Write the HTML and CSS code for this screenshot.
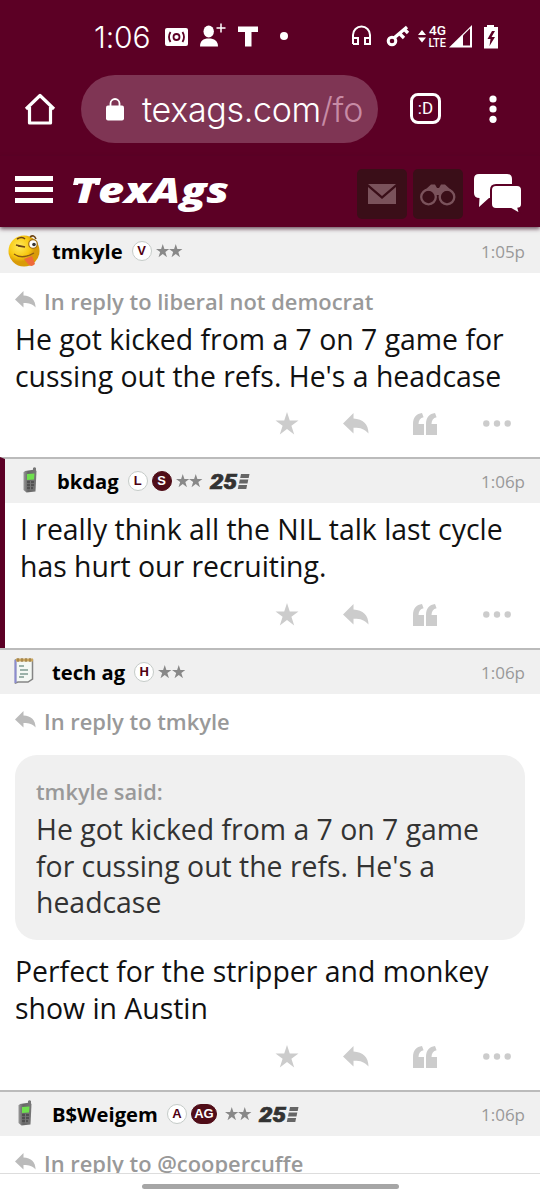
FILE: index.html
```html
<!DOCTYPE html>
<html lang="en">
<head>
  <meta charset="utf-8">
  <title>TexAgs Forums</title>
  <link rel="stylesheet" href="styles.css">
</head>
<body>
  <svg class="defs" width="0" height="0">
    <symbol id="star" viewBox="0 0 24 24"><path d="M12 0l2.900 8.800H24l-7.400 5.500 2.900 9.100L12 17.800l-7.500 5.600 2.900-9.100L0 8.800h9.100z"/></symbol>
    <symbol id="reply" viewBox="0 0 26 21"><path d="M0 10.500L10.500 0v5.500C20 6 25.500 11 25.500 20.500 21.500 15.800 17 14.700 10.500 14.800V20.500z"/></symbol>
    <symbol id="quote" viewBox="0 0 24 22"><path d="M0 22V11C0 4.500 3.500.6 9 0l1.600 4.300C7.200 5 5.600 7.500 5.500 11H11v11zM13 22V11C13 4.500 16.500.6 22 0l1.600 4.300C20.200 5 18.600 7.500 18.500 11H24v11z"/></symbol>
    <symbol id="dots" viewBox="0 0 28 7"><circle cx="3.300" cy="3.500" r="3.200"/><circle cx="14" cy="3.500" r="3.200"/><circle cx="24.700" cy="3.500" r="3.200"/></symbol>
    <linearGradient id="metal"><stop offset="0" stop-color="#999"/><stop offset=".35" stop-color="#666"/><stop offset="1" stop-color="#777"/></linearGradient>
    <symbol id="phone" viewBox="0 0 16 26">
      <path d="M11 4V1q1.500-1.500 3 0v5z" fill="#777"/>
      <path d="M3 4L13 2.500l1.500 1.500-1 20.500-9 1L1.500 23V5.500z" fill="url(#metal)"/>
      <path d="M5 7l7.500-.5-.5 6-7 .5z" fill="#6fe04e"/>
      <path d="M5 15h7M5 18h7M5 21h6" stroke="#484848" stroke-width="1.300"/>
      <path d="M8.500 14v9" stroke="#777"/>
    </symbol>
  </svg>

  <div class="status">
    <span class="clock">1:06</span>
    <svg class="status-left" width="130" height="30" viewBox="0 0 130 30">
      <rect x="1" y="6" width="23" height="18" rx="2" fill="#fff"/>
      <g fill="none" stroke="#5c0025" stroke-width="1.800"><circle cx="12.500" cy="15" r="3"/><path d="M6.500 10q-3 5 0 10M18.500 10q3 5 0 10"/></g>
      <g fill="#fff"><ellipse cx="44.700" cy="9.500" rx="5.200" ry="6"/><path d="M36 24.500c0-5.500 3-8 8.700-8S54 19 54 24.500z"/>
      <path d="M74 4.500h20V10h-6.500v14.500H81V10h-7z"/><circle cx="120" cy="14" r="4"/></g>
      <path d="M57 1.500v9M52.500 6h9" stroke="#fff" stroke-width="1.500"/>
    </svg>
    <svg class="status-right" width="152" height="30" viewBox="0 0 152 30">
      <path d="M2 22V13a8.500 8.500 0 0 1 17 0v9h-5v-6h4M2 16h5v6H2" fill="none" stroke="#fff" stroke-width="2"/>
      <circle cx="41" cy="19" r="3.800" fill="none" stroke="#fff" stroke-width="3"/>
      <path d="M43 16L56 5M49 12l4 4M54 8l3 3" stroke="#fff" stroke-width="3.300"/>
      <path d="M67 13l4-5 4 5zM67 15.500l4 5 4-5z" fill="#fff"/>
      <g fill="#fff" font-family="Roboto" font-size="12.500" font-weight="500"><text x="78" y="13" textLength="17" lengthAdjust="spacingAndGlyphs">4G</text><text x="77.500" y="25" textLength="17.500" lengthAdjust="spacingAndGlyphs">LTE</text></g>
      <path d="M98 25.500h23V3z" fill="#fff"/><path d="M112 13.500l7-7V23.500h-7z" fill="#5c0025"/>
      <path d="M133 5h3V3h7v2h4v21.500h-14V5z" fill="#fff"/><path d="M141 9l-4.500 8h3l-1 7 5.500-9h-3.500l3.500-6z" fill="#5c0025"/>
    </svg>
  </div>

  <div class="browser">
    <svg class="home" width="32" height="32" viewBox="0 0 32 32"><path d="M2 16L16 2.500 30 16M5.500 14v16h21V14" fill="none" stroke="#fff" stroke-width="3.200" stroke-linejoin="round"/></svg>
    <div class="url">
      <svg width="18" height="23" viewBox="0 0 18 23"><rect y="7.500" width="18" height="15" rx="2" fill="#fff"/><path d="M4.500 9V5.500a4.500 4.500 0 0 1 9 0V9" fill="none" stroke="#fff" stroke-width="1.800"/></svg>
      <span>texags.com<i>/fo</i></span>
    </div>
    <div class="tabs">:D</div>
    <svg class="menu" width="8" height="28" viewBox="0 0 8 28" fill="#fff"><circle cx="4" cy="4" r="3.600"/><circle cx="4" cy="14" r="3.600"/><circle cx="4" cy="24.300" r="3.600"/></svg>
  </div>

  <div class="site">
    <div class="burger"><b></b><b></b><b></b></div>
    <svg class="logo" width="160" height="44" viewBox="0 0 160 44">
      <text x="0" y="29" textLength="156" lengthAdjust="spacingAndGlyphs">TexAgs</text>
      <path d="M1.500 4H7L5 11H0zM23 4h5l-1.500 7H22z" fill="#fff"/>
    </svg>
    <div class="tile">
      <svg width="28" height="20" viewBox="0 0 28 20"><path d="M0 0h28L14 12zM0 3l14 12L28 3v17H0z" fill="#7a525b"/></svg>
    </div>
    <div class="tile">
      <svg width="36" height="23" viewBox="0 0 36 23" fill="none" stroke="#7a525b" stroke-width="2.300"><circle cx="8.500" cy="14" r="7.300"/><circle cx="27" cy="14" r="7.300"/><path d="M5 7l6-5.500h4L17 5h2l2-3.500h4L31 7 23 8l-3 4h-4l-4-4z" fill="#7a525b" stroke="none"/></svg>
    </div>
    <svg class="chat" width="50" height="42" viewBox="0 0 50 42">
      <path d="M6 1h28q5 0 5 5v14q0 5-5 5H16L6 34l.5-9Q1 25 1 20V6q0-5 5-5z" fill="#fff"/>
      <path d="M23 12h21q5 0 5 5v14q0 4-3.500 4.500L47 41l-9-5H23q-5 0-5-5V17q0-5 5-5z" fill="#fff" stroke="#5c0025" stroke-width="2"/>
    </svg>
  </div>

  <div class="thread">
    <div class="post first">
      <div class="head">
        <div class="avatar">
          <svg width="34" height="34" viewBox="0 0 34 34">
            <defs><radialGradient id="face" cx=".35" cy=".35"><stop offset="0" stop-color="#ffe95a"/><stop offset=".7" stop-color="#f8c810"/><stop offset="1" stop-color="#d99b08"/></radialGradient></defs>
            <circle cx="16" cy="17" r="15.500" fill="url(#face)"/>
            <circle cx="25" cy="10" r="4.300" fill="#fff" stroke="#a77518" stroke-width="1.300"/><circle cx="26" cy="10.500" r="1.800" fill="#333"/>
            <path d="M9 5q5-3 8 0M22 3q4-3 6 2M8 11l9 2-7-1" fill="none" stroke="#6b4315" stroke-width="1.600"/>
            <path d="M6 20q8 6 20-1" fill="none" stroke="#8b5a15" stroke-width="1.300"/>
            <path d="M16 25l8-3 3 8q-4 4-7 0z" fill="#ef6a3a"/>
          </svg>
        </div>
        <span class="name">tmkyle</span><span class="badge">V</span>
        <span class="stars"><svg><use href="#star"/></svg><svg><use href="#star"/></svg></span>
        <span class="time">1:05p</span>
      </div>
      <div class="body">
        <div class="inreply"><svg><use href="#reply"/></svg>In reply to liberal not democrat</div>
        <p>He got kicked from a 7 on 7 game for<br>cussing out the refs. He's a headcase</p>
      </div>
      <div class="actions"><svg><use href="#star"/></svg><svg><use href="#reply"/></svg><svg><use href="#quote"/></svg><svg><use href="#dots"/></svg></div>
    </div>

    <div class="post marked">
      <div class="head">
        <div class="avatar"><svg class="phone"><use href="#phone"/></svg></div>
        <span class="name">bkdag</span><span class="badge">L</span><span class="badge dark">S</span>
        <span class="stars"><svg><use href="#star"/></svg><svg><use href="#star"/></svg></span>
        <svg class="years" viewBox="0 0 40 17"><text x="0" y="16" textLength="27" lengthAdjust="spacingAndGlyphs">25</text><path d="M31 1h8.500l-.8 4H30.200zM29.800 6.500h8.500l-.8 4H29zM28.600 12h8.500l-.8 4H27.800z"/></svg>
        <span class="time">1:06p</span>
      </div>
      <div class="body plain">
        <p>I really think all the NIL talk last cycle<br>has hurt our recruiting.</p>
      </div>
      <div class="actions"><svg><use href="#star"/></svg><svg><use href="#reply"/></svg><svg><use href="#quote"/></svg><svg><use href="#dots"/></svg></div>
    </div>

    <div class="post">
      <div class="head">
        <div class="avatar">
          <svg class="notepad" width="20" height="27" viewBox="0 0 20 27">
            <path d="M1.500 3H18.500V22L14 25H4L1.500 26z" fill="#f4f8f4" stroke="#858585" stroke-width="1.500"/>
            <path d="M1.500 3v23" stroke="#8b8bd0" stroke-width="2"/><path d="M2 3h17" stroke="#c9a45c" stroke-width="3"/>
            <path d="M4 1v4M8 1v4M12 1v4M16 1v4" stroke="#8a6d3a"/>
            <path d="M5 9h5M6 13h8M6 17h8M5 20h5" stroke="#7d9a90" stroke-width="1.500"/>
          </svg>
        </div>
        <span class="name">tech ag</span><span class="badge">H</span>
        <span class="stars"><svg><use href="#star"/></svg><svg><use href="#star"/></svg></span>
        <span class="time">1:06p</span>
      </div>
      <div class="body">
        <div class="inreply"><svg><use href="#reply"/></svg>In reply to tmkyle</div>
        <div class="quoted">
          <div class="who">tmkyle said:</div>
          <p>He got kicked from a 7 on 7 game<br>for cussing out the refs. He's a<br>headcase</p>
        </div>
        <p>Perfect for the stripper and monkey<br>show in Austin</p>
      </div>
      <div class="actions"><svg><use href="#star"/></svg><svg><use href="#reply"/></svg><svg><use href="#quote"/></svg><svg><use href="#dots"/></svg></div>
    </div>

    <div class="post">
      <div class="head">
        <div class="avatar"><svg class="phone"><use href="#phone"/></svg></div>
        <span class="name">B$Weigem</span><span class="badge">A</span><span class="badge dark wide">AG</span>
        <span class="stars"><svg><use href="#star"/></svg><svg><use href="#star"/></svg></span>
        <svg class="years" viewBox="0 0 40 17"><text x="0" y="16" textLength="27" lengthAdjust="spacingAndGlyphs">25</text><path d="M31 1h8.500l-.8 4H30.200zM29.800 6.500h8.500l-.8 4H29zM28.600 12h8.500l-.8 4H27.800z"/></svg>
        <span class="time">1:06p</span>
      </div>
      <div class="body">
        <div class="inreply"><svg><use href="#reply"/></svg>In reply to @coopercuffe</div>
      </div>
    </div>
  </div>
  <div class="gesture"><b></b></div>
</body>
</html>
```
FILE: styles.css
```css
* { box-sizing: border-box; }
body { margin: 0; width: 540px; height: 1200px; overflow: hidden; background: #fff; font-family: "Open Sans", sans-serif; display: flex; flex-direction: column; }
svg { display: block; flex: none; }
p { margin: 0; font-size: 28.4px; line-height: 36.5px; color: #111; white-space: nowrap; }
.defs { position: absolute; }

/* phone and browser bars */
.status { height: 74px; flex: none; background: #5c0025; color: #fff; display: flex; align-items: center; padding: 0 37px 0 94px; }
.clock { font-family: Inter, sans-serif; font-weight: 300; font-size: 30px; letter-spacing: -.1px; width: 70px; white-space: nowrap; }
.status-right { margin-left: auto; }
.browser { height: 82px; flex: none; background: #5c0025; display: flex; align-items: flex-start; }
.home { margin: 19px 0 0 24px; }
.url { width: 297px; height: 68px; margin: 1px 0 0 25px; border-radius: 34px; background: #7f3554; display: flex; align-items: center; padding-left: 25px; gap: 18px; color: #fff; font-family: Inter, sans-serif; font-weight: 300; font-size: 34px; letter-spacing: -.3px; white-space: nowrap; }
.url i { font-style: normal; color: #c78ba5; }
.tabs { width: 31px; height: 31px; margin: 19px 0 0 32px; border: 3px solid #fff; border-radius: 8px; color: #fff; font: 17px/24px Roboto, sans-serif; text-align: center; }
.menu { margin: 21px 0 0 48px; }

/* site header */
.site { height: 71px; flex: none; background: #5c0025; display: flex; align-items: flex-start; box-shadow: 0 2px 4px rgba(60, 20, 40, .7); position: relative; padding-left: 15px; }
.burger { display: flex; flex-direction: column; gap: 6px; margin-top: 20px; }
.burger b { width: 38px; height: 5px; background: #fff; }
.logo { margin: 18px 0 0 20px; overflow: visible; }
.logo text { font: italic 800 35px "Open Sans", sans-serif; fill: #fff; }
.tile { width: 50px; height: 50px; margin: 13px 6px 0 0; background: #3a0e18; border-radius: 5px; display: flex; align-items: center; justify-content: center; }
.logo + .tile { margin-left: 124px; }
.chat { margin: 17px 0 0 4px; }

/* posts */
.thread { height: 946px; flex: none; overflow: hidden; }
.post { border-top: 2px solid #bbb; }
.post.first { border-top: 0; }
.post.marked { border-left: 5px solid #5c0025; }
.head { height: 44px; background: #f0f0f0; display: flex; align-items: center; padding-right: 15px; }
.first .head { height: 46px; padding-top: 2px; }
.avatar { width: 52px; padding-left: 8px; }
.phone { width: 16px; height: 26px; margin-left: 9px; margin-top: -3px; }
.notepad { margin: -4px 0 0 6px; }
.name { font-size: 20.2px; font-weight: 700; color: #000; margin-right: 9px; white-space: nowrap; }
.badge { width: 20px; height: 20px; border: 1px solid #c5cbc8; border-radius: 10px; background: #fff; color: #500012; font: bold 13px/18px "Liberation Sans", sans-serif; text-align: center; margin-right: 4px; }
.badge.dark { background: #500d18; border-color: #500d18; color: #fff; }
.badge.wide { width: 26px; margin-right: 8px; }
.stars { display: flex; }
.stars svg { width: 13.5px; height: 13.5px; fill: #888; }
.years { width: 40px; height: 17px; margin-left: 7px; overflow: visible; fill: #666; }
.years text { font: italic 900 21px Roboto, sans-serif; fill: #333; stroke: #333; stroke-width: .7px; }
.time { margin-left: auto; font-size: 17px; color: #999; }
.body { padding: 14px 15px 0; }
.body.plain { padding-top: 8px; }
.inreply { height: 34px; display: flex; align-items: flex-start; font-size: 21.9px; line-height: 30px; font-weight: 600; color: #999; white-space: nowrap; }
.inreply svg { width: 21px; height: 17px; margin: 4px 8px 0 0; fill: #bbb; }
.post:not(.first) > .body:not(.plain) { padding-top: 13px; }
.quoted { margin: 14px 0 13px; height: 185px; background: #f0f0f0; border-radius: 22px; padding: 22px 21px 0; }
.quoted p { color: #333; }
.who { height: 34px; font-size: 21.8px; line-height: 30px; font-weight: 550; color: #999; }
.actions { height: 64px; display: flex; justify-content: flex-end; align-items: center; padding: 0 29px 3px 0; gap: 44px; }
.first .actions { height: 63px; padding-bottom: 4px; }
.actions svg { height: 23px; width: 24px; fill: #ccc; }
.actions svg:nth-child(2) { width: 26px; height: 21px; }
.actions svg:nth-child(3) { height: 22px; margin-right: 2px; }
.actions svg:nth-child(4) { width: 28px; height: 7px; }

.gesture { height: 27px; flex: none; border-top: 1px solid #ddd; padding-top: 10px; background: #fff; }
.gesture b { display: block; width: 257px; height: 5px; margin: 0 auto; border-radius: 3px; background: #a6a6a6; }
```
